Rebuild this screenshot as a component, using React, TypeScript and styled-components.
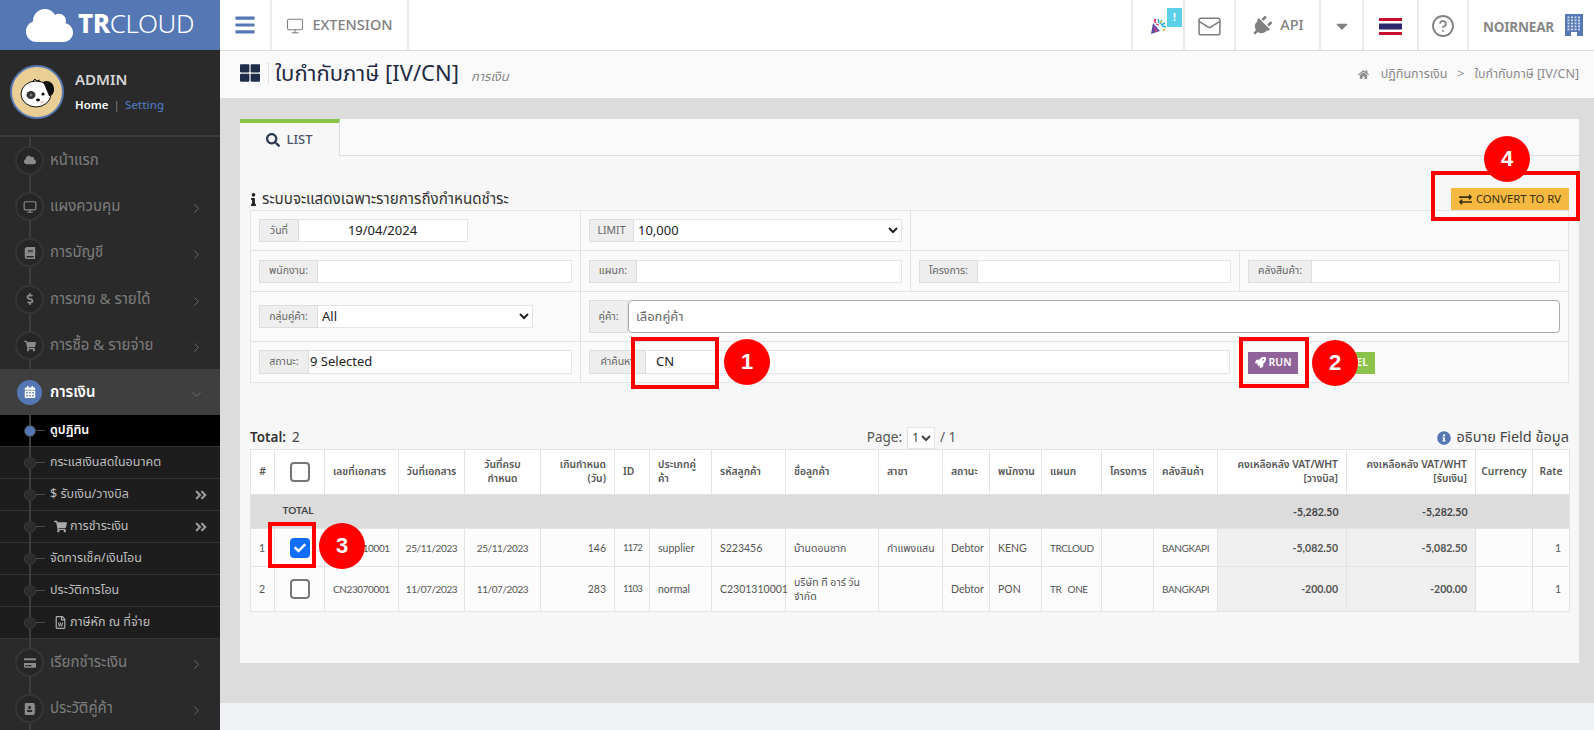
import React from "react";
import styled, { createGlobalStyle } from "styled-components";
import {
  FaCloud, FaBook, FaDollarSign, FaShoppingCart, FaCalendarAlt, FaCreditCard, FaAddressBook,
  FaRocket, FaExchangeAlt, FaHome, FaInfoCircle, FaInfo, FaSearch, FaPlug, FaCaretDown,
  FaBars, FaThLarge, FaAngleDoubleRight, FaCheck, FaRegFileWord,
} from "react-icons/fa";
import { Monitor, ChevronRight, ChevronDown, Mail, CircleHelp } from "lucide-react";

const THAI = `"Noto Sans Thai", "Noto Sans Thai Looped", Kanit, Prompt`;
const FONT = `${THAI}, "Open Sans", "Noto Sans", sans-serif`;
const TABLE_FONT = `Lato, ${THAI}, "Open Sans", sans-serif`;
const BLUE = "#5578b5";

const Global = createGlobalStyle`
  html, body { margin: 0; padding: 0; width: 1594px; height: 730px; overflow: hidden; background: #dcdcdc; }
  * { box-sizing: border-box; }
  body, input, select, button { font-family: ${FONT}; }
`;

const Page = styled.div`
  position: relative; width: 1594px; height: 730px; overflow: hidden;
  display: grid; grid-template-columns: 220px 1fr;
`;
const LeftColumn = styled.aside`display: flex; flex-direction: column; height: 730px; background: #2a2a2a;`;
const Logo = styled.div`
  height: 50px; background: ${BLUE}; color: #fff; display: flex; align-items: center; padding-left: 26px; gap: 5px; flex: none;
`;
const LogoText = styled.div`font-size: 26px; line-height: 1; font-weight: 300; letter-spacing: -0.4px; b { font-weight: 800; }`;

const Profile = styled.div`
  height: 87px; flex: none; display: flex; gap: 11px; padding: 15px 0 0 10px; border-bottom: 2px solid #3a3a3a;
`;
const Avatar = styled.div`
  width: 54px; height: 54px; border-radius: 50%; border: 2px solid ${BLUE}; background: #e9cf96; overflow: hidden; flex: none;
  svg { display: block; }
`;
const ProfileText = styled.div`padding-top: 6px;`;
const ProfileName = styled.div`color: #d5d5d5; font-size: 15px; font-weight: 600; line-height: 20px;`;
const ProfileLinks = styled.div`margin-top: 7px; font-size: 11.5px; line-height: 16px; color: #777; display: flex; gap: 5px; font-weight: 500;`;
const HomeLink = styled.span`color: #fff; font-weight: 600;`;
const SettingLink = styled.span`color: #4e74b9;`;

const Menu = styled.nav`
  position: relative; flex: 1; overflow: hidden;
  &::before { content: ""; position: absolute; left: 28.5px; top: 0; bottom: 0; width: 2px; background: #3c3c3c; z-index: 1; }
`;
const MenuItem = styled.div<{ $active?: boolean }>`
  height: 46.4px; display: flex; align-items: center; position: relative;
  background: ${(p) => (p.$active ? "#3f3f3f" : "transparent")};
  color: ${(p) => (p.$active ? "#fff" : "#7d7d7d")};
  font-size: 15px; font-weight: ${(p) => (p.$active ? 600 : 400)};
`;
const MenuIcon = styled.span<{ $active?: boolean }>`
  position: relative; z-index: 2; margin-left: ${(p) => (p.$active ? 17 : 15)}px; margin-right: ${(p) => (p.$active ? 8 : 6)}px;
  width: ${(p) => (p.$active ? 25 : 29)}px; height: ${(p) => (p.$active ? 25 : 29)}px; border-radius: 50%; flex: none;
  display: flex; align-items: center; justify-content: center;
  background: ${(p) => (p.$active ? BLUE : "#262626")};
  border: ${(p) => (p.$active ? "none" : "2px solid #353535")};
  color: ${(p) => (p.$active ? "#fff" : "#8b8b8b")};
  font-size: 12px;
`;
const MenuLabel = styled.span`flex: 1; white-space: nowrap;`;
const MenuArrow = styled.span`width: 31px; flex: none; color: #6f6f6f; display: flex; padding-top: 4px;`;
const SubItem = styled.div<{ $active?: boolean }>`
  height: 32px; display: flex; align-items: center; position: relative;
  background: ${(p) => (p.$active ? "#000" : "#1d1d1d")};
  border-bottom: 1px solid #333;
  color: ${(p) => (p.$active ? "#fff" : "#bdbdbd")};
  font-size: 12.5px; font-weight: ${(p) => (p.$active ? 600 : 400)};
`;
const SubDot = styled.span<{ $active?: boolean }>`
  position: relative; z-index: 2; margin-left: 24px; width: 12px; height: 12px; border-radius: 50%; flex: none;
  background: ${(p) => (p.$active ? BLUE : "#2c2c2c")}; border: 1px solid #3c3c3c;
`;
const SubTick = styled.span`width: 9px; height: 1px; background: #4a4a4a; flex: none; margin-right: 5px;`;
const SubLabel = styled.span<{ $indent?: boolean }>`
  flex: 1; display: flex; align-items: center; gap: 3px; white-space: nowrap; padding-left: ${(p) => (p.$indent ? 4 : 0)}px;
  svg { font-size: 13px; color: #aaa; }
`;
const SubArrow = styled.span`width: 26px; flex: none; color: #999; font-size: 14px; display: flex;`;

const RightColumn = styled.main`display: flex; flex-direction: column; height: 730px; min-width: 0;`;
const TopBar = styled.header`height: 51px; flex: none; display: flex; background: #fff; border-bottom: 1px solid #dcdcdc;`;
const TopCell = styled.div<{ $w: number; $blue?: boolean }>`
  width: ${(p) => p.$w}px; flex: none; display: flex; align-items: center; justify-content: center; gap: 8px;
  padding-top: ${(p) => (p.$blue ? 0 : 2)}px;
  border-right: 2px solid #ececec; color: ${(p) => (p.$blue ? BLUE : "#808080")}; position: relative;
  font-size: 14.5px; font-weight: 500;
`;
const TopSpacer = styled.div`flex: 1; border-right: 2px solid #ececec;`;
const Badge = styled.span`
  position: absolute; left: 34px; top: 8px; width: 15px; height: 19px; background: #5bd0e8; color: #fff;
  font-size: 10px; font-weight: 700; display: flex; align-items: center; justify-content: center;
`;
const UserCell = styled.div`flex: none; width: 125px; display: flex; align-items: center; gap: 11px; padding: 6px 0 0 14px; color: #888; font-weight: 700; font-size: 13.5px; letter-spacing: -0.2px; svg { margin-top: -6px; }`;

const TitleBar = styled.div`height: 47px; flex: none; background: #fafafa; display: flex; align-items: center; padding: 0 15px 0 20px;`;
const TitleIcon = styled.span`display: flex; color: #1f2d4a; font-size: 20px; padding-right: 8px; margin: -4px 6px 0 0; border-right: 1px dotted #ccc; height: 20px; align-items: center;`;
const Title = styled.h1`margin: -1px 0 0; font-size: 22px; font-weight: 400; color: #1f2a44; white-space: nowrap; display: flex; align-items: baseline;`;
const TitleSub = styled.small`margin-left: 12px; font-size: 13px; font-style: italic; color: #888;`;
const Breadcrumb = styled.div`margin-left: auto; font-size: 12.5px; color: #8a8a8a; display: flex; align-items: center; gap: 10px; svg { font-size: 11px; margin-right: 2px; }`;

const Content = styled.div`height: 605px; flex: none; background: #dcdcdc; padding: 21px 15px 0 20px;`;
const Footer = styled.div`flex: 1; background: #f0f1f4;`;
const Panel = styled.section`background: #f7f7f7; height: 544px; border-radius: 2px 2px 0 0; display: flex; flex-direction: column;`;
const TabStrip = styled.div`height: 37px; flex: none; background: #fafafa; border-bottom: 1px solid #dedede; display: flex;`;
const Tab = styled.div`
  width: 100px; height: 37px; background: #f7f7f7; border-top: 4px solid #8bc34a; border-right: 1px solid #dedede;
  display: flex; align-items: center; justify-content: center; gap: 6px; color: #4a5568; font-size: 13px; font-weight: 500;
  svg { font-size: 14px; color: #2f3b52; }
`;
const PanelBody = styled.div`padding: 32px 10px 0; flex: 1;`;
const NoticeRow = styled.div`height: 22px; display: flex; align-items: center; justify-content: space-between;`;
const Notice = styled.div`display: flex; align-items: center; gap: 2px; font-size: 15.2px; color: #333; svg { font-size: 13px; color: #222; margin-left: -3px; }`;
const ConvertButton = styled.button`
  width: 118px; height: 22px; border: none; background: #f5b942; color: #3a2f10; font-size: 11.3px; font-weight: 400;
  display: flex; align-items: center; justify-content: center; gap: 4px; padding: 0; white-space: nowrap;
  svg { font-size: 13px; }
`;

const FilterBox = styled.div`border: 1px solid #e3e3e3; background: #fafafa;`;
const FilterRow = styled.div<{ $h: number }>`display: flex; height: ${(p) => p.$h}px; & + & { border-top: 1px solid #e3e3e3; }`;
const FilterCell = styled.div<{ $w?: number }>`
  ${(p) => (p.$w ? `width: ${p.$w}px; flex: none;` : "flex: 1;")}
  display: flex; align-items: center; padding: 0 8px; gap: 18px; min-width: 0;
  & + & { border-left: 1px solid #e3e3e3; }
`;
const Field = styled.div<{ $w?: number; $h?: number }>`
  ${(p) => (p.$w ? `width: ${p.$w}px; flex: none;` : "flex: 1;")}
  display: flex; height: ${(p) => p.$h ?? 24}px; min-width: 0;
`;
const FieldLabel = styled.label<{ $w: number }>`
  width: ${(p) => p.$w}px; flex: none; background: #eee; border: 1px solid #ddd; color: #666; font-size: 10.5px;
  display: flex; align-items: center; justify-content: center; white-space: nowrap; overflow: hidden;
`;
const FieldInput = styled.input<{ $center?: boolean; $indent?: number }>`
  flex: 1; min-width: 0; height: 100%; border: 1px solid #e5e5e5; border-left: none; background: #fff; outline: none;
  font-size: 13px; color: #222; padding: 0 2px 0 ${(p) => p.$indent ?? 1}px; text-align: ${(p) => (p.$center ? "center" : "left")}; margin: 0;
`;
const FieldSelect = styled.select`
  flex: 1; min-width: 0; height: 100%; border: 1px solid #e5e5e5; border-left: none; background: #fff; outline: none; font-size: 13px; color: #222; margin: 0;
`;
const PartnerInput = styled.input`
  flex: 1; min-width: 0; height: 100%; border: 1px solid #aaa; border-radius: 4px; background: #fff; outline: none;
  font-size: 13px; padding: 0 7px; margin: 0; &::placeholder { color: #666; }
`;
const ActionGroup = styled.div`display: flex; gap: 17px; margin-top: 1px;`;
const ActionButton = styled.button<{ $bg: string; $w: number; $end?: boolean }>`
  width: ${(p) => p.$w}px; height: 22px; border: none; background: ${(p) => p.$bg}; color: #fff; font-size: 10.5px; font-weight: 600;
  padding: ${(p) => (p.$end ? "0 7px 0 0" : "0")};
  display: flex; align-items: center; justify-content: ${(p) => (p.$end ? "flex-end" : "center")}; gap: 3px; svg { font-size: 11px; }
`;

const TotalBar = styled.div`
  margin-top: 43px; height: 23px; display: grid; grid-template-columns: 1fr auto 1fr; align-items: center; color: #444; font-size: 13.5px;
`;
const TotalCount = styled.div`b { font-weight: 600; color: #333; margin-right: 6px; }`;
const Pager = styled.div`display: flex; align-items: center; gap: 5px; color: #555; margin-left: 4px;`;
const PageSelect = styled.select`height: 22px; width: 28px; border: 1px solid #e5e5e5; background: #fff; font-size: 12.5px; color: #444; padding: 0; outline: none;`;
const FieldHelp = styled.div`justify-self: end; display: flex; align-items: center; gap: 5px; font-size: 14.5px; color: #444; svg { color: ${BLUE}; font-size: 14px; }`;

const DataTable = styled.table`
  width: 1319px; table-layout: fixed; border-collapse: collapse; font-size: 10.5px; color: #555; background: #fcfcfc;
  border: 1px solid #e3e3e3; font-family: ${TABLE_FONT};
`;
const HeadRow = styled.tr`height: 45px;`;
const Th = styled.th<{ $right?: boolean; $left?: boolean }>`
  border: 1px solid #e3e3e3; background: #fff; font-weight: 600; color: #555; line-height: 14px; font-size: 10.3px;
  font-family: ${FONT};
  padding: 0 ${(p) => (p.$right || p.$left ? 8 : 4)}px;
  text-align: ${(p) => (p.$right ? "right" : p.$left ? "left" : "center")};
`;
const TotalRow = styled.tr`height: 34px; background: #dcdcdc;`;
const TotalLabel = styled.td`padding: 0 11px 3px 0; font-weight: 700; color: #444; font-size: 10px; text-align: right;`;
const TotalCell = styled.td<{ $right?: boolean }>`
  padding: 0 8px; font-weight: 700; color: #444; font-size: 10.5px; text-align: ${(p) => (p.$right ? "right" : "left")};
`;
const BodyRow = styled.tr<{ $h: number }>`height: ${(p) => p.$h}px;`;
const Td = styled.td<{ $right?: boolean; $center?: boolean; $shade?: boolean; $tight?: boolean; $narrow?: boolean }>`
  border: 1px solid #e3e3e3; padding: 0 ${(p) => (p.$center ? 2 : 8)}px; line-height: 14px; color: #555; white-space: normal;
  text-align: ${(p) => (p.$right ? "right" : p.$center ? "center" : "left")};
  background: ${(p) => (p.$shade ? "#efefef" : "transparent")};
  font-weight: ${(p) => (p.$shade ? 700 : 400)};
  ${(p) => p.$tight && "font-size: 10px; letter-spacing: -0.4px; word-spacing: 4px;"}
  ${(p) => p.$narrow && "font-size: 9.5px; letter-spacing: -0.8px;"}
`;
const CheckMark = styled.span<{ $on?: boolean }>`
  display: flex; width: 20px; height: 20px; margin: 0 auto; border-radius: 4px; align-items: center; justify-content: center;
  background: ${(p) => (p.$on ? "#0d6efd" : "#fff")}; border: 2px solid ${(p) => (p.$on ? "#0d6efd" : "#777")}; color: #fff; font-size: 12px;
`;

const RedBox = styled.div<{ $x: number; $y: number; $w: number; $h: number }>`
  position: absolute; left: ${(p) => p.$x}px; top: ${(p) => p.$y}px; width: ${(p) => p.$w}px; height: ${(p) => p.$h}px;
  border: 4px solid #f00; z-index: 5;
`;
const Marker = styled.div<{ $x: number; $y: number }>`
  position: absolute; left: ${(p) => p.$x - 23}px; top: ${(p) => p.$y - 23}px; width: 46px; height: 46px; border-radius: 50%; background: #f00; color: #fff;
  display: flex; align-items: center; justify-content: center; font: 700 22px "Liberation Sans", Arial, sans-serif; z-index: 6;
`;

const columns: { t: React.ReactNode; w: number; a?: "r" | "l" | "c" }[] = [
  { t: "#", w: 24 }, { t: "", w: 50 }, { t: "เลขที่เอกสาร", w: 74, a: "l" }, { t: "วันที่เอกสาร", w: 66 },
  { t: <>วันที่ครบ<br />กำหนด</>, w: 76 }, { t: "เกินกำหนด (วัน)", w: 74, a: "r" }, { t: "ID", w: 35, a: "l" },
  { t: "ประเภทคู่ค้า", w: 62, a: "l" }, { t: "รหัสลูกค้า", w: 74, a: "l" }, { t: "ชื่อลูกค้า", w: 93, a: "l" },
  { t: "สาขา", w: 64, a: "l" }, { t: "สถานะ", w: 47, a: "l" }, { t: "พนักงาน", w: 52, a: "l" }, { t: "แผนก", w: 60, a: "l" },
  { t: "โครงการ", w: 52, a: "l" }, { t: "คลังสินค้า", w: 64, a: "l" },
  { t: <>คงเหลือหลัง VAT/WHT<br />[วางบิล]</>, w: 129, a: "r" }, { t: <>คงเหลือหลัง VAT/WHT<br />[รับเงิน]</>, w: 129, a: "r" },
  { t: "Currency", w: 57 }, { t: "Rate", w: 37 },
];

const rows = [
  { n: 1, h: 38, on: true, doc: "CN23110001", d1: "25/11/2023", d2: "25/11/2023", late: 146, id: 1172, type: "supplier", code: "S223456", name: "บ้านดอนชาก", branch: "กำแพงแสน", staff: "KENG", dept: "TRCLOUD", a: "-5,082.50" },
  { n: 2, h: 45, on: false, doc: "CN23070001", d1: "11/07/2023", d2: "11/07/2023", late: 283, id: 1103, type: "normal", code: "C2301310001", name: "บริษัท ที อาร์ วัน จำกัด", branch: "", staff: "PON", dept: "TR ONE", a: "-200.00" },
];

const Chevron = <ChevronRight size={15} strokeWidth={1.5} />;
const menuTop = [
  { icon: <FaCloud />, label: "หน้าแรก" },
  { icon: <Monitor size={14} />, label: "แผงควบคุม", arrow: true },
  { icon: <FaBook />, label: "การบัญชี", arrow: true },
  { icon: <FaDollarSign />, label: "การขาย & รายได้", arrow: true },
  { icon: <FaShoppingCart />, label: "การซื้อ & รายจ่าย", arrow: true },
];
const subMenu: { label: string; icon?: React.ReactNode; active?: boolean; more?: boolean; indent?: boolean }[] = [
  { label: "ดูปฏิทิน", active: true },
  { label: "กระแสเงินสดในอนาคต" },
  { label: "$ รับเงิน/วางบิล", more: true },
  { label: "การชำระเงิน", icon: <FaShoppingCart />, more: true, indent: true },
  { label: "จัดการเช็ค/เงินโอน" },
  { label: "ประวัติการโอน" },
  { label: "ภาษีหัก ณ ที่จ่าย", icon: <FaRegFileWord />, indent: true },
];
const menuBottom = [
  { icon: <FaCreditCard />, label: "เรียกชำระเงิน" },
  { icon: <FaAddressBook />, label: "ประวัติคู่ค้า" },
];

const Dog = () => (
  <svg width="50" height="50" viewBox="0 0 50 50">
    <ellipse cx="24" cy="27" rx="15" ry="13" fill="#fff" stroke="#111" strokeWidth="1" />
    <path d="M31 15c6-3 12 2 11 9-1 4-3 5-5 5-2-5-4-10-6-14z" fill="#111" />
    <ellipse cx="19" cy="28" rx="4.5" ry="4" fill="#333" />
    <circle cx="19" cy="28" r="1.5" fill="#777" />
    <circle cx="31" cy="27" r="1.6" fill="#111" />
    <ellipse cx="26" cy="33" rx="2" ry="1.4" fill="#111" />
    <circle cx="30" cy="35" r="1.6" fill="#f4c7c3" />
    <path d="M20 15l3-3 2 2 3-1" fill="none" stroke="#111" strokeWidth="1" />
  </svg>
);
const Party = () => (
  <svg width="17" height="16" viewBox="0 0 17 16">
    <path d="M3 5l7 8-9 3z" fill="#5a4fa5" />
    <path d="M3.5 8l4 5-2 1z" fill="#e23a6d" />
    <path d="M8 1l1 4M12 2l-2 4M15 5l-4 2M16 9l-4-1" stroke="#2aa8d8" strokeWidth="1.4" />
    <path d="M6 6l3 1M4 3l2 2" stroke="#e23a6d" strokeWidth="1.3" />
    <circle cx="5" cy="2" r="1.2" fill="#e23a6d" /><circle cx="14" cy="12" r="1.2" fill="#f5b942" /><circle cx="11" cy="4" r="1" fill="#f5b942" />
  </svg>
);
const Flag = () => (
  <svg width="23" height="17" viewBox="0 0 23 17">
    <rect width="23" height="17" fill="#fff" />
    <rect width="23" height="3" fill="#c8102e" /><rect y="14" width="23" height="3" fill="#c8102e" />
    <rect y="5.5" width="23" height="6" fill="#2d2a6e" />
  </svg>
);
const Building = () => (
  <svg width="18" height="22" viewBox="0 0 18 22">
    <rect width="18" height="22" fill={BLUE} />
    {[0, 1, 2, 3, 4].map((r) => [0, 1, 2, 3].map((c) => <rect key={`${r}${c}`} x={2.5 + c * 3.5} y={2.5 + r * 3} width="2" height="1.8" fill="#cfdaf0" />))}
    <rect x="6" y="18" width="6" height="4" fill="#fff" />
  </svg>
);

export default function App() {
  return (
    <>
      <Global />
      <Page>
        <LeftColumn>
          <Logo>
            <FaCloud size={47} />
            <LogoText><b>TR</b>CLOUD</LogoText>
          </Logo>
          <Profile>
            <Avatar><Dog /></Avatar>
            <ProfileText>
              <ProfileName>ADMIN</ProfileName>
              <ProfileLinks><HomeLink>Home</HomeLink>|<SettingLink>Setting</SettingLink></ProfileLinks>
            </ProfileText>
          </Profile>
          <Menu>
            {menuTop.map((m) => (
              <MenuItem key={m.label}>
                <MenuIcon>{m.icon}</MenuIcon>
                <MenuLabel>{m.label}</MenuLabel>
                {m.arrow && <MenuArrow>{Chevron}</MenuArrow>}
              </MenuItem>
            ))}
            <MenuItem $active>
              <MenuIcon $active><FaCalendarAlt /></MenuIcon>
              <MenuLabel>การเงิน</MenuLabel>
              <MenuArrow><ChevronDown size={15} strokeWidth={1.5} /></MenuArrow>
            </MenuItem>
            {subMenu.map((s) => (
              <SubItem key={s.label} $active={s.active}>
                <SubDot $active={s.active} />
                <SubTick />
                <SubLabel $indent={s.indent}>{s.icon}{s.label}</SubLabel>
                {s.more && <SubArrow><FaAngleDoubleRight /></SubArrow>}
              </SubItem>
            ))}
            {menuBottom.map((m) => (
              <MenuItem key={m.label}>
                <MenuIcon>{m.icon}</MenuIcon>
                <MenuLabel>{m.label}</MenuLabel>
                <MenuArrow>{Chevron}</MenuArrow>
              </MenuItem>
            ))}
          </Menu>
        </LeftColumn>

        <RightColumn>
          <TopBar>
            <TopCell $w={52} $blue><FaBars size={22} /></TopCell>
            <TopCell $w={137}><Monitor size={18} strokeWidth={1.5} />EXTENSION</TopCell>
            <TopSpacer />
            <TopCell $w={52}><Party /><Badge>!</Badge></TopCell>
            <TopCell $w={51}><Mail size={25} strokeWidth={1.5} /></TopCell>
            <TopCell $w={85}><FaPlug size={21} style={{ transform: "rotate(45deg)" }} />API</TopCell>
            <TopCell $w={43}><FaCaretDown size={18} /></TopCell>
            <TopCell $w={55}><Flag /></TopCell>
            <TopCell $w={50}><CircleHelp size={24} strokeWidth={1.8} /></TopCell>
            <UserCell>NOIRNEAR<Building /></UserCell>
          </TopBar>
          <TitleBar>
            <TitleIcon><FaThLarge /></TitleIcon>
            <Title>ใบกำกับภาษี [IV/CN]<TitleSub>การเงิน</TitleSub></Title>
            <Breadcrumb><FaHome /><span>ปฏิทินการเงิน</span><span>&gt;</span><span>ใบกำกับภาษี [IV/CN]</span></Breadcrumb>
          </TitleBar>
          <Content>
            <Panel>
              <TabStrip><Tab><FaSearch />LIST</Tab></TabStrip>
              <PanelBody>
                <NoticeRow>
                  <Notice><FaInfo />ระบบจะแสดงเฉพาะรายการถึงกำหนดชำระ</Notice>
                  <ConvertButton><FaExchangeAlt />CONVERT TO RV</ConvertButton>
                </NoticeRow>
                <FilterBox>
                  <FilterRow $h={39}>
                    <FilterCell $w={329}>
                      <Field $w={209} $h={23}><FieldLabel $w={40}>วันที่</FieldLabel><FieldInput $center defaultValue="19/04/2024" /></Field>
                    </FilterCell>
                    <FilterCell $w={330}>
                      <Field $w={313} $h={23}>
                        <FieldLabel $w={45}>LIMIT</FieldLabel>
                        <FieldSelect defaultValue="10,000"><option>10,000</option></FieldSelect>
                      </Field>
                    </FilterCell>
                    <FilterCell />
                  </FilterRow>
                  <FilterRow $h={41}>
                    <FilterCell $w={329}><Field $h={23}><FieldLabel $w={59}>พนักงาน:</FieldLabel><FieldInput /></Field></FilterCell>
                    <FilterCell $w={330}><Field $h={23}><FieldLabel $w={48}>แผนก:</FieldLabel><FieldInput /></Field></FilterCell>
                    <FilterCell $w={329}><Field $h={23}><FieldLabel $w={59}>โครงการ:</FieldLabel><FieldInput /></Field></FilterCell>
                    <FilterCell><Field $h={23}><FieldLabel $w={64}>คลังสินค้า:</FieldLabel><FieldInput /></Field></FilterCell>
                  </FilterRow>
                  <FilterRow $h={50}>
                    <FilterCell $w={329}>
                      <Field $w={274} $h={23}>
                        <FieldLabel $w={59}>กลุ่มคู่ค้า:</FieldLabel>
                        <FieldSelect defaultValue="All"><option>All</option></FieldSelect>
                      </Field>
                    </FilterCell>
                    <FilterCell><Field $h={33}><FieldLabel $w={39}>คู่ค้า:</FieldLabel><PartnerInput placeholder="เลือกคู่ค้า" /></Field></FilterCell>
                  </FilterRow>
                  <FilterRow $h={41}>
                    <FilterCell $w={329}><Field><FieldLabel $w={50}>สถานะ:</FieldLabel><FieldInput defaultValue="9 Selected" /></Field></FilterCell>
                    <FilterCell>
                      <Field $w={641}><FieldLabel $w={57}>คำค้นหา</FieldLabel><FieldInput $indent={10} defaultValue="CN" /></Field>
                      <ActionGroup>
                        <ActionButton $bg="#8f6299" $w={50}><FaRocket />RUN</ActionButton>
                        <ActionButton $bg="#8bc34a" $w={60} $end>EXCEL</ActionButton>
                      </ActionGroup>
                    </FilterCell>
                  </FilterRow>
                </FilterBox>

                <TotalBar>
                  <TotalCount><b>Total:</b>2</TotalCount>
                  <Pager>Page:<PageSelect defaultValue="1"><option>1</option></PageSelect>/ 1</Pager>
                  <FieldHelp><FaInfoCircle />อธิบาย Field ข้อมูล</FieldHelp>
                </TotalBar>
                <DataTable>
                  <colgroup>{columns.map((c, i) => <col key={i} style={{ width: c.w }} />)}</colgroup>
                  <thead>
                    <HeadRow>
                      {columns.map((c, i) => (
                        <Th key={i} $right={c.a === "r"} $left={c.a === "l"}>{i === 1 ? <CheckMark /> : c.t}</Th>
                      ))}
                    </HeadRow>
                  </thead>
                  <tbody>
                    <TotalRow>
                      <TotalLabel colSpan={2}>TOTAL</TotalLabel>
                      <TotalCell colSpan={14} />
                      <TotalCell $right>-5,282.50</TotalCell>
                      <TotalCell $right>-5,282.50</TotalCell>
                      <TotalCell colSpan={2} />
                    </TotalRow>
                    {rows.map((r) => (
                      <BodyRow key={r.n} $h={r.h}>
                        <Td>{r.n}</Td>
                        <Td><CheckMark $on={r.on}>{r.on && <FaCheck />}</CheckMark></Td>
                        <Td $tight>{r.doc}</Td>
                        <Td $center $tight>{r.d1}</Td>
                        <Td $center $tight>{r.d2}</Td>
                        <Td $right>{r.late}</Td>
                        <Td $narrow>{r.id}</Td>
                        <Td>{r.type}</Td>
                        <Td>{r.code}</Td>
                        <Td>{r.name}</Td>
                        <Td>{r.branch}</Td>
                        <Td>Debtor</Td>
                        <Td>{r.staff}</Td>
                        <Td $tight>{r.dept}</Td>
                        <Td />
                        <Td $tight>BANGKAPI</Td>
                        <Td $right $shade>{r.a}</Td>
                        <Td $right $shade>{r.a}</Td>
                        <Td />
                        <Td $right>1</Td>
                      </BodyRow>
                    ))}
                  </tbody>
                </DataTable>
              </PanelBody>
            </Panel>
          </Content>
          <Footer />
        </RightColumn>

        <RedBox $x={631} $y={337} $w={88} $h={52} />
        <Marker $x={747} $y={362}>1</Marker>
        <RedBox $x={1239} $y={337} $w={70} $h={51} />
        <Marker $x={1335} $y={363}>2</Marker>
        <RedBox $x={268} $y={522} $w={48} $h={46} />
        <Marker $x={342} $y={546}>3</Marker>
        <RedBox $x={1431} $y={171} $w={149} $h={50} />
        <Marker $x={1507} $y={159}>4</Marker>
      </Page>
    </>
  );
}
